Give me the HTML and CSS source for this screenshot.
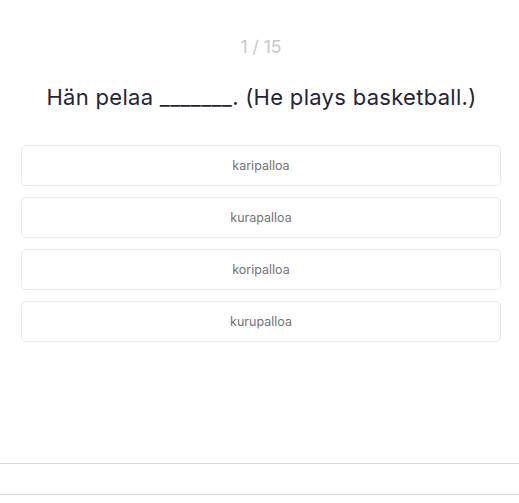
FILE: index.html
```html
<!DOCTYPE html>
<html lang="fi">
<head>
<meta charset="utf-8">
<title>Quiz</title>
<link rel="stylesheet" href="styles.css">
</head>
<body>
<main class="quiz">
  <div class="counter">1 / 15</div>
  <h1 class="question">Hän pelaa _______. (He plays basketball.)</h1>
  <div class="options">
    <button class="option">karipalloa</button>
    <button class="option">kurapalloa</button>
    <button class="option">koripalloa</button>
    <button class="option">kurupalloa</button>
  </div>
</main>
<footer class="footer"></footer>
</body>
</html>
```
FILE: styles.css
```css
html, body {
  margin: 0;
  padding: 0;
  background: #ffffff;
}
body {
  font-family: "Inter", "Open Sans", sans-serif;
  width: 519px;
  height: 503px;
  overflow: hidden;
}
.quiz {
  padding: 36px 18px 0 21px;
  height: 427px;
  box-sizing: border-box;
}
.counter {
  text-align: center;
  font-size: 17.5px;
  line-height: 22px;
  color: #c9c9c9;
}
.question {
  margin: 25px 0 0 1px;
  text-align: center;
  font-weight: 400;
  font-size: 22px;
  line-height: 28px;
  letter-spacing: 0.3px;
  color: #25253a;
}
.options {
  margin-top: 34px;
  display: flex;
  flex-direction: column;
  gap: 11px;
}
.option {
  display: block;
  width: 480px;
  height: 41px;
  border: 1px solid #ebebeb;
  border-radius: 5px;
  background: #ffffff;
  font-family: inherit;
  font-size: 12.5px;
  color: #737373;
  text-align: center;
  padding: 0;
  cursor: pointer;
}
.footer {
  margin-top: 36px;
  height: 30px;
  border-top: 1px solid #d9d9d9;
  border-bottom: 1px solid #d9d9d9;
}
```
